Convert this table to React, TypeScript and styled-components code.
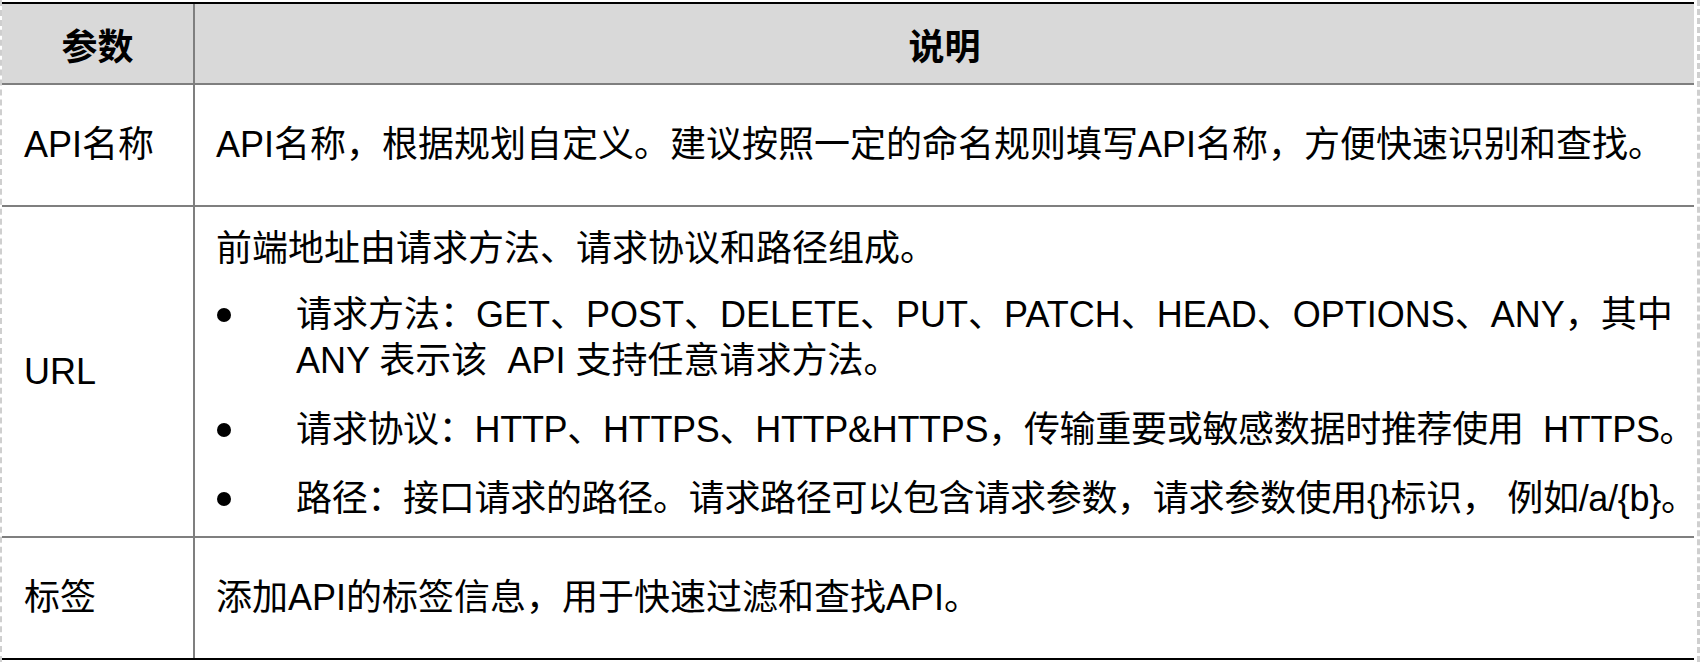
import styled, { createGlobalStyle } from 'styled-components';

const GlobalStyle = createGlobalStyle`
  html, body {
    margin:0;
    padding:0;
    background:#fff;
  }
  body {
    font-family:"Liberation Sans", "Noto Sans CJK SC", sans-serif;
    color:#000;
  }
  *{
    box-sizing:border-box;
  }
`

const Page = styled.div`
  width:1700px;
  height:662px;
  padding:2px 3px 2px 0;
  display:flex;
  border-left:2px dashed #cfcfcf;
  border-right:3px dashed #cfcfcf;
`

const Table = styled.div`
  flex:1;
  display:flex;
  flex-direction:column;
  border-top:2px solid #000;
  border-bottom:2px solid #000;
`

const Row = styled.div<{ $h: number; $head?: boolean }>`
  display:grid;
  grid-template-columns:191px 1fr;
  grid-template-rows:${(p) => p.$h}px;
  height:${(p) => p.$h}px;
  box-sizing:content-box;
  background-color:${(p) => (p.$head ? '#d9d9d9' : '#fff')};
  & + &{
    border-top:2px solid #7f7f7f;
  }
`

const Cell = styled.div<{ $top?: boolean }>`
  display:flex;
  flex-direction:column;
  justify-content:${(p) => (p.$top ? 'flex-start' : 'center')};
  align-items:flex-start;
  padding:${(p) => (p.$top ? '19px 0 0 22px' : '0 0 0 22px')};
  font-size:36px;
  line-height:46px;
  white-space:pre;
  min-width:0;
  & + &{
    border-left:2px solid #7f7f7f;
    padding-left:21px;
  }
`

const HeadCell = styled.div`
  display:flex;
  align-items:center;
  justify-content:center;
  font-size:36px;
  font-weight:700;
  & + &{
    border-left:2px solid #7f7f7f;
  }
`

const Para = styled.div`
  margin:0;
`

const Bullet = styled.div<{ $gap: number; $tight?: number }>`
  display:flex;
  margin-top:${(p) => p.$gap}px;
  letter-spacing:${(p) => p.$tight ?? 0}px;
`

const Mark = styled.span`
  flex:0 0 80px;
  height:46px;
  display:flex;
  align-items:center;
  padding-left:1px;
  &::before{
    content:'';
    width:14px;
    height:14px;
    border-radius:50%;
    background:#000;
  }
`

const BulletText = styled.span`
  flex:1;
`

export default function App() {
  return (
    <>
      <GlobalStyle />
      <Page>
        <Table>
          <Row $h={79} $head>
            <HeadCell>参数</HeadCell>
            <HeadCell>说明</HeadCell>
          </Row>
          <Row $h={120}>
            <Cell>API名称</Cell>
            <Cell>API名称，根据规划自定义。建议按照一定的命名规则填写API名称，方便快速识别和查找。</Cell>
          </Row>
          <Row $h={329}>
            <Cell>URL</Cell>
            <Cell $top>
              <Para>前端地址由请求方法、请求协议和路径组成。</Para>
              <Bullet $gap={20}>
                <Mark />
                <BulletText>
                  请求方法：GET、POST、DELETE、PUT、PATCH、HEAD、OPTIONS、ANY，其中
                  <br />
                  {'ANY 表示该  API 支持任意请求方法。'}
                </BulletText>
              </Bullet>
              <Bullet $gap={23} $tight={-0.3}>
                <Mark />
                <BulletText>{'请求协议：HTTP、HTTPS、HTTP&HTTPS，传输重要或敏感数据时推荐使用  HTTPS。'}</BulletText>
              </Bullet>
              <Bullet $gap={23} $tight={-0.3}>
                <Mark />
                <BulletText>{'路径：接口请求的路径。请求路径可以包含请求参数，请求参数使用{}标识， 例如/a/{b}。'}</BulletText>
              </Bullet>
            </Cell>
          </Row>
          <Row $h={120}>
            <Cell>标签</Cell>
            <Cell>添加API的标签信息，用于快速过滤和查找API。</Cell>
          </Row>
        </Table>
      </Page>
    </>
  );
}
